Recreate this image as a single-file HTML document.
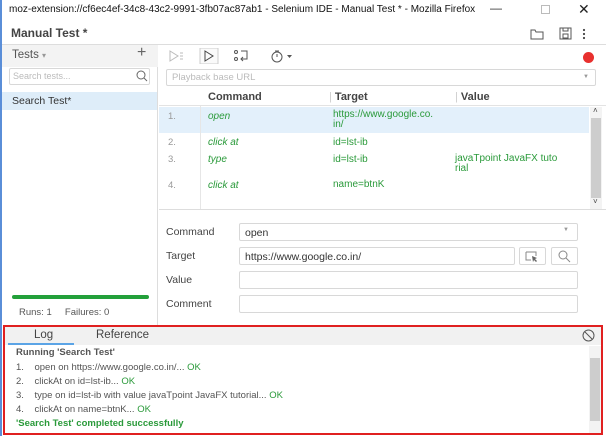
<!DOCTYPE html>
<html><head><style>
*{margin:0;padding:0;box-sizing:border-box}
body{width:606px;height:436px;overflow:hidden;background:#fff;font-family:"Liberation Sans",Arial,sans-serif;font-size:10px;color:#333;position:relative}
.a{position:absolute}
.g{color:#2a9a3a}
.inp{position:absolute;border:1px solid #d8d8d8;border-radius:2px;background:#fff}
</style></head><body>
<div class="a" style="left:0;top:0;width:2px;height:436px;background:#5a8ed8"></div>
<div class="a" style="left:9px;top:4px;font-size:10px;color:#111">moz-extension://cf6ec4ef-34c8-43c2-9991-3fb07ac87ab1 - Selenium IDE - Manual Test * - Mozilla Firefox</div>
<div class="a" style="left:490px;top:1px;font-size:12px;color:#333">—</div>
<div class="a" style="left:541px;top:5px;width:9px;height:9px;border:1px solid #bbb"></div>
<div class="a" style="left:578px;top:1px;font-size:14px;color:#222">✕</div>
<div class="a" style="left:2px;top:21px;width:604px;height:24px;border-bottom:1px solid #ddd"></div>
<div class="a" style="left:11px;top:26px;font-size:12px;font-weight:bold;color:#444">Manual Test *</div>
<svg class="a" style="left:530px;top:27px" width="60" height="14"><path d="M1 3h4l1 2h7v7H1z" fill="none" stroke="#555"/><rect x="30" y="1" width="11" height="11" fill="none" stroke="#555"/><rect x="33" y="1" width="5" height="3" fill="none" stroke="#555"/><rect x="33" y="7" width="5" height="4" fill="none" stroke="#555"/><circle cx="54" cy="3" r="1.1" fill="#444"/><circle cx="54" cy="7" r="1.1" fill="#444"/><circle cx="54" cy="11" r="1.1" fill="#444"/></svg>
<div class="a" style="left:2px;top:45px;width:156px;height:280px;border-right:1px solid #ddd"></div>
<div class="a" style="left:2px;top:45px;width:156px;height:22px;background:#f3f3f3"></div>
<div class="a" style="left:12px;top:49px;font-size:11.5px;color:#555">Tests <span style="font-size:8px;color:#999">▾</span></div>
<div class="a" style="left:137px;top:44px;font-size:16px;color:#666">+</div>
<div class="inp" style="left:9px;top:68px;width:141px;height:17px"></div>
<div class="a" style="left:13px;top:71px;font-size:9px;color:#bbb">Search tests...</div>
<svg class="a" style="left:136px;top:70px" width="12" height="12"><circle cx="5" cy="5" r="4" fill="none" stroke="#666"/><path d="M8 8l3 3" stroke="#666"/></svg>
<div class="a" style="left:2px;top:92px;width:155px;height:18px;background:#deedf9"></div>
<div class="a" style="left:12px;top:95px;font-size:10.5px;color:#333">Search Test*</div>
<div class="a" style="left:12px;top:295px;width:137px;height:4px;border-radius:2px;background:#23a03a"></div>
<div class="a" style="left:19px;top:307px;font-size:9.5px;color:#555">Runs: 1 &nbsp;&nbsp;&nbsp;&nbsp;Failures: 0</div>
<svg class="a" style="left:165px;top:48px;" width="140" height="16"><path d="M5 3l8 5-8 5z" fill="none" stroke="#bbb"/><path d="M15 5h3M15 8h3M15 11h3" stroke="#bbb"/><rect x="35" y="0" width="18" height="16" fill="#fafafa" stroke="#ccc"/><path d="M40 3l8 5-8 5z" fill="none" stroke="#444"/><circle cx="71" cy="4" r="1.5" fill="none" stroke="#555"/><circle cx="71" cy="11" r="1.5" fill="none" stroke="#555"/><path d="M76 3h6v8h-6M78 9l-2 2 2 2" fill="none" stroke="#555"/><circle cx="112" cy="9" r="5" fill="none" stroke="#555"/><path d="M110 3h4M112 9V6" stroke="#555"/><path d="M122 7h5l-2.5 3z" fill="#555"/></svg>
<div class="a" style="left:583px;top:52px;width:11px;height:11px;border-radius:50%;background:#e8302e"></div>
<div class="inp" style="left:166px;top:69px;width:430px;height:17px"></div>
<div class="a" style="left:172px;top:72px;font-size:9.5px;color:#bbb">Playback base URL</div>
<div class="a" style="left:583px;top:74px;font-size:6px;color:#999">▼</div>
<div class="a" style="left:159px;top:90px;width:447px;height:16px;border-bottom:1px solid #e3e3e3"></div>
<div class="a" style="left:208px;top:91px;font-size:11px;font-weight:bold;color:#444">Command</div>
<div class="a" style="left:329px;top:91px;font-size:11px;font-weight:bold;color:#444"><span style="color:#ccc;font-weight:normal">|</span> Target</div>
<div class="a" style="left:455px;top:91px;font-size:11px;font-weight:bold;color:#444"><span style="color:#ccc;font-weight:normal">|</span> Value</div>
<div class="a" style="left:159px;top:107px;width:430px;height:26px;background:#e3f0fb"></div>
<div class="a" style="left:200px;top:106px;width:1px;height:104px;background:#e6e6e6"></div>
<div class="a" style="left:159px;top:209px;width:447px;height:1px;background:#ddd"></div>
<div class="a" style="left:590px;top:107px;width:12px;height:102px;background:#f3f3f3"></div>
<div class="a" style="left:591px;top:118px;width:10px;height:80px;background:#cdcdcd"></div>
<div class="a" style="left:593px;top:106px;font-size:8px;color:#444">˄</div>
<div class="a" style="left:593px;top:197px;font-size:8px;color:#444">˅</div>
<div class="a" style="left:168px;top:111px;color:#999;font-size:9.5px">1.</div>
<div class="a g" style="left:208px;top:111px;font-style:italic">open</div>
<div class="a g" style="left:333px;top:110px;line-height:10px">https://www.google.co.<br>in/</div>
<div class="a" style="left:168px;top:137px;color:#999;font-size:9.5px">2.</div>
<div class="a g" style="left:208px;top:137px;font-style:italic">click at</div>
<div class="a g" style="left:333px;top:137px">id=lst-ib</div>
<div class="a" style="left:168px;top:154px;color:#999;font-size:9.5px">3.</div>
<div class="a g" style="left:208px;top:154px;font-style:italic">type</div>
<div class="a g" style="left:333px;top:154px">id=lst-ib</div>
<div class="a g" style="left:455px;top:154px;line-height:10px">javaTpoint JavaFX tuto<br>rial</div>
<div class="a" style="left:168px;top:180px;color:#999;font-size:9.5px">4.</div>
<div class="a g" style="left:208px;top:180px;font-style:italic">click at</div>
<div class="a g" style="left:333px;top:179px">name=btnK</div>
<div class="a" style="left:166px;top:226px;font-size:10.5px;color:#444">Command</div>
<div class="inp" style="left:239px;top:223px;width:339px;height:18px"></div>
<div class="a" style="left:245px;top:227px;font-size:10.5px">open</div>
<div class="a" style="left:563px;top:227px;font-size:6px;color:#999">▼</div>
<div class="a" style="left:166px;top:250px;font-size:10.5px;color:#444">Target</div>
<div class="inp" style="left:239px;top:247px;width:276px;height:18px"></div>
<div class="a" style="left:245px;top:251px;font-size:10.5px">https://www.google.co.in/</div>
<div class="inp" style="left:519px;top:247px;width:27px;height:18px"></div>
<div class="inp" style="left:551px;top:247px;width:27px;height:18px"></div>
<svg class="a" style="left:525px;top:250px" width="60" height="13"><path d="M1 2h10v4M1 2v8h5" fill="none" stroke="#888"/><path d="M7 6l5 2-2 1 2 2-1 1-2-2-1 2z" fill="#666"/><circle cx="38" cy="5" r="4" fill="none" stroke="#888"/><path d="M41 8l4 4" stroke="#888"/></svg>
<div class="a" style="left:166px;top:274px;font-size:10.5px;color:#444">Value</div>
<div class="inp" style="left:239px;top:271px;width:339px;height:18px"></div>
<div class="a" style="left:166px;top:298px;font-size:10.5px;color:#444">Comment</div>
<div class="inp" style="left:239px;top:295px;width:339px;height:18px"></div>
<div class="a" style="left:3px;top:325px;width:600px;height:110px;border:2px solid #e02020"></div>
<div class="a" style="left:5px;top:327px;width:596px;height:18px;background:#f1f1f1"></div>
<div class="a" style="left:8px;top:343px;width:66px;height:2px;background:#5ba4e6"></div>
<div class="a" style="left:34px;top:329px;font-size:11.5px;color:#444">Log</div>
<div class="a" style="left:96px;top:329px;font-size:11.5px;color:#444">Reference</div>
<svg class="a" style="left:582px;top:329px" width="13" height="13"><circle cx="6.5" cy="6.5" r="5.5" fill="none" stroke="#555"/><path d="M3 3l7 7" stroke="#555"/></svg>
<div class="a" style="left:589px;top:346px;width:12px;height:87px;background:#f3f3f3"></div>
<div class="a" style="left:590px;top:358px;width:10px;height:63px;background:#cdcdcd"></div>
<div class="a" style="left:16px;top:347px;font-size:9.5px;font-weight:bold;color:#555">Running 'Search Test'</div>
<div class="a" style="left:16px;top:362px;font-size:9.5px;color:#555">1.&nbsp;&nbsp;&nbsp; open on https://www.google.co.in/... <span class="g">OK</span></div>
<div class="a" style="left:16px;top:376px;font-size:9.5px;color:#555">2.&nbsp;&nbsp;&nbsp; clickAt on id=lst-ib... <span class="g">OK</span></div>
<div class="a" style="left:16px;top:390px;font-size:9.5px;color:#555">3.&nbsp;&nbsp;&nbsp; type on id=lst-ib with value javaTpoint JavaFX tutorial... <span class="g">OK</span></div>
<div class="a" style="left:16px;top:404px;font-size:9.5px;color:#555">4.&nbsp;&nbsp;&nbsp; clickAt on name=btnK... <span class="g">OK</span></div>
<div class="a g" style="left:16px;top:418px;font-size:9.5px;font-weight:bold">'Search Test' completed successfully</div>
</body></html>
